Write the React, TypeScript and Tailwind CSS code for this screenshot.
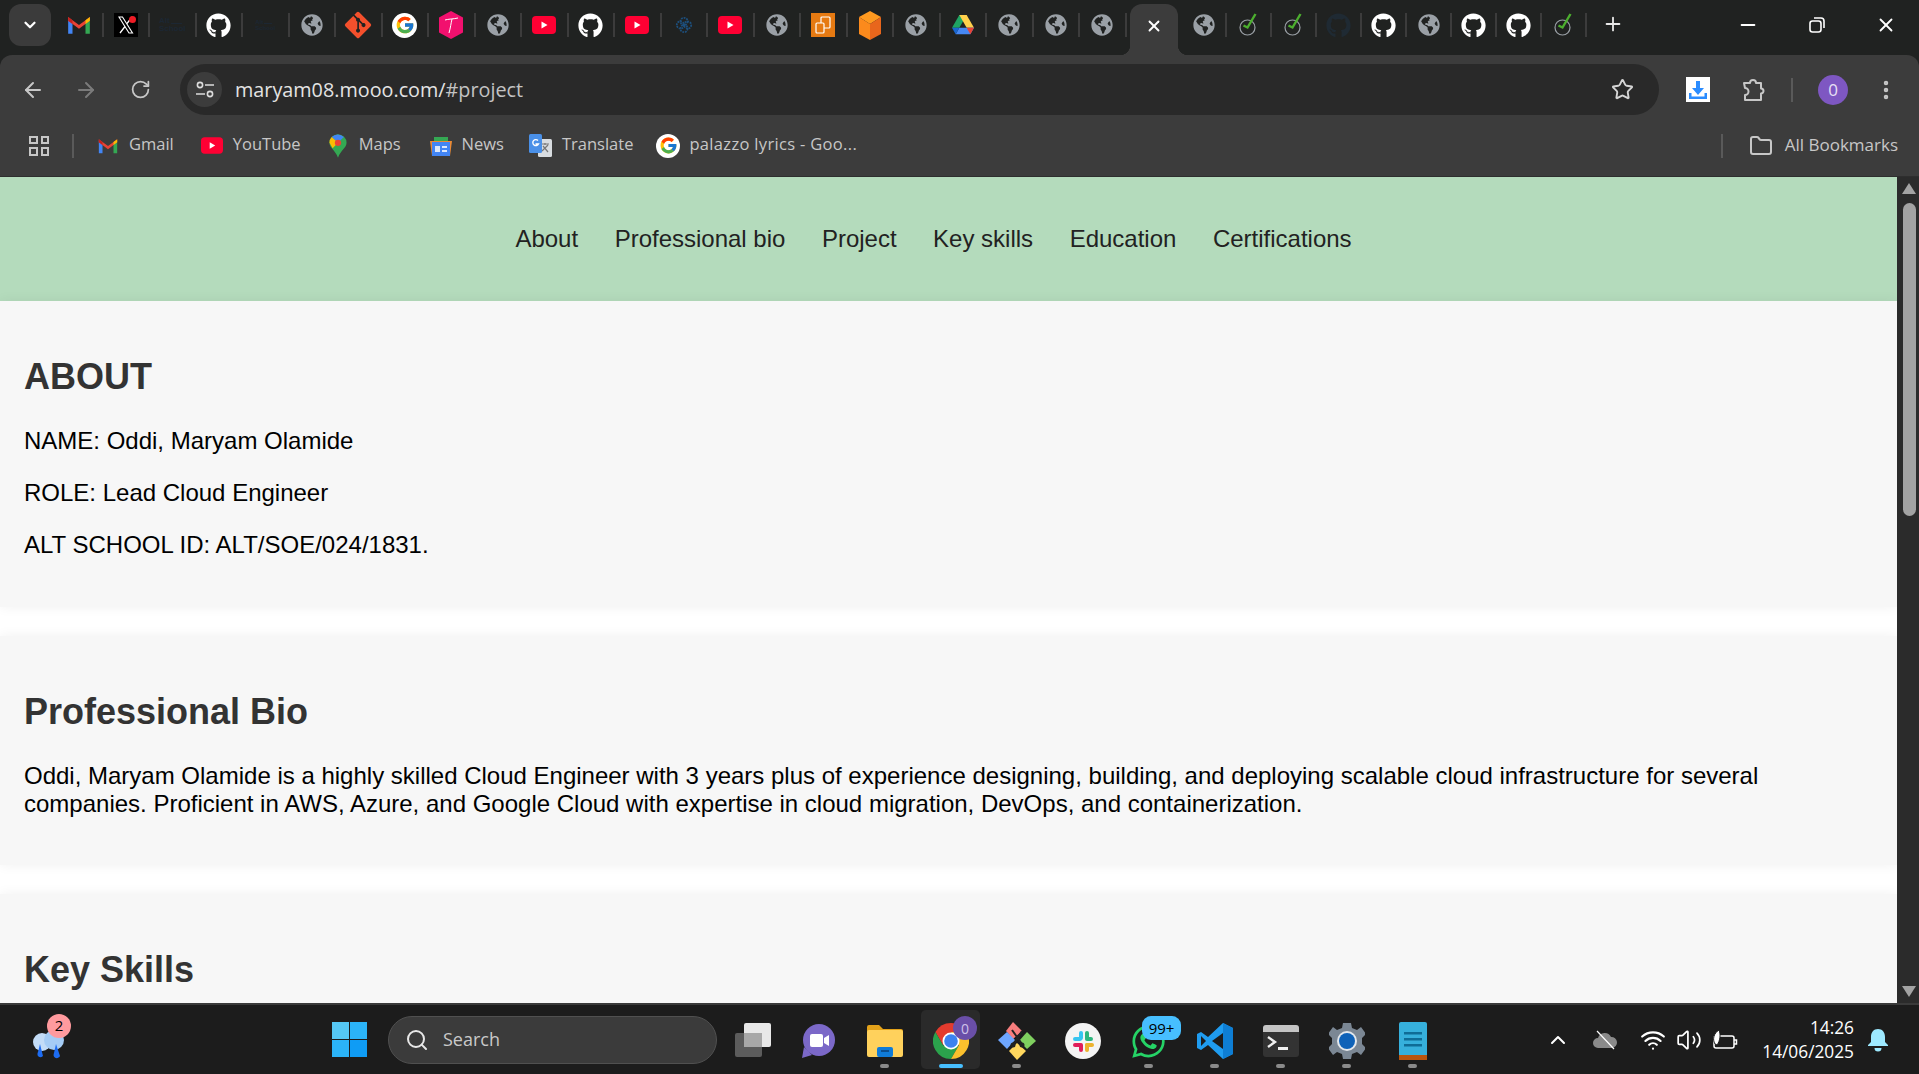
import type { ReactNode } from "react";
import { FaGithub, FaGlobeAmericas, FaGitAlt, FaWhatsapp } from "react-icons/fa";
import { FcGoogle } from "react-icons/fc";
import {
  ArrowLeft,
  ArrowRight,
  ChevronDown,
  ChevronUp,
  Folder,
  Minus,
  MoreVertical,
  Plus,
  RotateCw,
  Search,
  Star,
  Volume2,
  Wifi,
  X,
} from "lucide-react";

const SEGOE = "font-['Open_Sans','Noto_Sans',sans-serif]";

function Globe() {
  return <FaGlobeAmericas className="h-[22px] w-[22px] text-[#9aa0a6]" />;
}

function Gh({ dark }: { dark?: boolean }) {
  return <FaGithub className={dark ? "h-[25px] w-[25px] text-[#1f2a33]" : "h-[25px] w-[25px] text-white"} />;
}

function GmailIcon({ size = 22 }: { size?: number }) {
  return (
    <svg width={size} height={size} viewBox="0 0 24 24" fill="none">
      <path d="M2 6v14h4V10z" fill="#4285f4" />
      <path d="M22 6v14h-4V10z" fill="#34a853" />
      <path d="M2 4.5 6 7.5 12 12 18 7.5 22 4.5V8l-10 7.5L2 8z" fill="#ea4335" />
      <path d="M2 4.5 6 7.5V11L2 8z" fill="#c5221f" />
      <path d="M22 4.5 18 7.5V11l4-3z" fill="#fbbc04" />
    </svg>
  );
}

function YtIcon({ w = 24, h = 18 }: { w?: number; h?: number }) {
  return (
    <svg width={w} height={h} viewBox="0 0 24 18">
      <rect width="24" height="18" rx="4" fill="#ff0033" />
      <path d="M9.5 5.5v7l6-3.5z" fill="#fff" />
    </svg>
  );
}

function XIcon() {
  return (
    <div className="relative flex h-[24px] w-[24px] items-center justify-center bg-black">
      <svg width="18" height="20" viewBox="0 0 18 20" fill="none">
        <path d="M2 2h3.5l10 16h-3.5z" stroke="#fff" strokeWidth="1.1" />
        <path d="M15 2 10 8.500M8 11.500 3 18" stroke="#fff" strokeWidth="1.3" />
      </svg>
      <span className="absolute right-[2px] top-[3px] h-[7px] w-[7px] rounded-full bg-[#ee1c25]" />
    </div>
  );
}

function AltIcon({ big }: { big?: boolean }) {
  return (
    <div
      className={`flex flex-col font-['Liberation_Sans',sans-serif] font-bold text-[#1c2733] ${big ? "text-[8px] leading-[8px]" : "text-[6px] leading-[6px]"}`}
    >
      <span className="flex items-end">
        Alt
        <span className={`mb-[1px] ml-[1px] h-px bg-[#1c2733] ${big ? "w-[11px]" : "w-[8px]"}`} />
      </span>
      <span>School</span>
    </div>
  );
}

function GoogleDisc({ size = 24 }: { size?: number }) {
  return (
    <div className="flex items-center justify-center rounded-full bg-white" style={{ width: size, height: size }}>
      <FcGoogle style={{ width: size - 5, height: size - 5 }} />
    </div>
  );
}

function THex() {
  return (
    <svg width="24" height="28" viewBox="0 0 24 28">
      <path d="M12 0 24 6.500v15L12 28 0 21.500v-15z" fill="#f2106e" />
      <path d="M6 9c3-1 9-1 13-2M13 8c-1 4-1.500 9-3 14" stroke="#fff" strokeWidth="1" fill="none" />
    </svg>
  );
}

function CheckIcon() {
  return (
    <svg width="20" height="26" viewBox="0 0 20 26" fill="none">
      <circle cx="8.500" cy="15.500" r="7.500" stroke="#9aa0a6" strokeWidth="1.2" />
      <path d="M4.500 13.500 8.500 15.500 16.500 2" stroke="#4caf2f" strokeWidth="2.400" />
    </svg>
  );
}

function Aws() {
  return (
    <div className="flex h-[24px] w-[24px] items-center justify-center bg-[#e67a12]">
      <svg width="16" height="18" viewBox="0 0 16 18" fill="none" stroke="#fff" strokeWidth="1.2">
        <rect x="6" y="1" width="9" height="11" rx="1" />
        <rect x="1" y="7" width="8" height="10" rx="1" fill="#e67a12" />
      </svg>
    </div>
  );
}

function Cube() {
  return (
    <svg width="22" height="29" viewBox="0 0 22 29">
      <path d="M11 0 22 6 11 13 0 6z" fill="#ff9a20" />
      <path d="M0 6 11 13v16L0 23z" fill="#fb8a1c" />
      <path d="M22 6 11 13v16l11-6z" fill="#e8661c" />
    </svg>
  );
}

function Drive({ size = 22 }: { size?: number }) {
  return (
    <svg width={size} height={size} viewBox="0 0 24 22">
      <path d="M8 0h8l-8 14H0z" fill="#1fa463" />
      <path d="M16 0l8 14h-8L8 0z" fill="#ffd04b" />
      <path d="M4 21 8 14h16l-4 7z" fill="#4688f4" />
      <path d="M0 14h8l-4 7z" fill="#1967d2" />
      <path d="M24 14h-8l4 7z" fill="#ea4335" />
    </svg>
  );
}

function Blossom() {
  return (
    <svg width="18" height="18" viewBox="0 0 20 20" fill="none" stroke="#1d4f7c" strokeWidth="2" strokeDasharray="2 1">
      <circle cx="10" cy="6" r="4" />
      <circle cx="6" cy="10" r="4" />
      <circle cx="14" cy="10" r="4" />
      <circle cx="10" cy="14" r="4" />
    </svg>
  );
}

function Tab({ children, wide }: { children: ReactNode; wide?: boolean }) {
  return (
    <div className={`flex h-[24px] items-center justify-center border-r-2 border-[#3c3c3c] ${wide ? "w-[46.5px]" : "w-[45px]"}`}>
      {children}
    </div>
  );
}

function TabStrip() {
  const before: ReactNode[] = [
    <GmailIcon size={26} />,
    <XIcon />,
    <AltIcon big />,
    <Gh />,
    <AltIcon />,
    <Globe />,
    <FaGitAlt className="h-[30px] w-[30px] text-[#f4502c]" />,
    <GoogleDisc size={25} />,
    <THex />,
    <Globe />,
    <YtIcon />,
    <Gh />,
    <YtIcon />,
    <Blossom />,
    <YtIcon />,
    <Globe />,
    <Aws />,
    <Cube />,
    <Globe />,
    <Drive />,
    <Globe />,
    <Globe />,
    <Globe />,
  ];
  const after: ReactNode[] = [
    <Globe />,
    <CheckIcon />,
    <CheckIcon />,
    <Gh dark />,
    <Gh />,
    <Globe />,
    <Gh />,
    <Gh />,
    <CheckIcon />,
  ];
  return (
    <div className="flex h-[55px] items-end bg-[#202221]">
      <div className="mb-[9px] ml-[9px] flex h-[42px] w-[42px] items-center justify-center rounded-[12px] bg-[#3b3b3b]">
        <ChevronDown className="h-[18px] w-[18px] text-white" strokeWidth={3} />
      </div>
      <div className="mb-[18px] ml-[6px] flex items-center">
        {before.map((icon, i) => (
          <Tab key={i} wide>
            {icon}
          </Tab>
        ))}
      </div>
      <div className="relative ml-[3.500px] flex h-[51px] w-[48px] items-start justify-center rounded-t-[12px] bg-[#3c3c3c] pt-[13px]">
        <X className="h-[18px] w-[18px] text-white" strokeWidth={2.5} />
        <div className="absolute bottom-0 left-[-10px] h-[10px] w-[10px] bg-[radial-gradient(circle_at_0_0,#202221_10px,#3c3c3c_10.5px)]" />
        <div className="absolute bottom-0 right-[-10px] h-[10px] w-[10px] bg-[radial-gradient(circle_at_100%_0,#202221_10px,#3c3c3c_10.5px)]" />
      </div>
      <div className="mb-[18px] ml-[4px] flex items-center">
        {after.map((icon, i) => (
          <Tab key={i}>{icon}</Tab>
        ))}
      </div>
      <div className="mb-[20px] ml-[15px] flex w-[22px] justify-center">
        <Plus className="h-[22px] w-[22px] text-[#e8e8e8]" strokeWidth={2} />
      </div>
      <div className="flex-1" />
      <div className="mb-[19px] flex items-center pr-[22px] text-white">
        <Minus className="h-[22px] w-[22px]" strokeWidth={2} />
        <div className="ml-[47px] flex h-[22px] w-[22px] items-center justify-center">
          <svg width="18" height="18" viewBox="0 0 18 18" fill="none" stroke="#fff" strokeWidth="1.6">
            <rect x="2" y="5" width="11" height="11" rx="2.500" />
            <path d="M6 2h7a3 3 0 0 1 3 3v7" />
          </svg>
        </div>
        <X className="ml-[47px] h-[22px] w-[22px]" strokeWidth={2} />
      </div>
    </div>
  );
}

function Toolbar() {
  return (
    <div className="flex h-[60px] items-start rounded-t-[12px] bg-[#3c3c3c] pt-[9px]">
      <div className="flex h-[51px] items-center pl-[21px]">
        <ArrowLeft className="h-[24px] w-[24px] text-[#c7c7c7]" strokeWidth={2} />
        <ArrowRight className="ml-[29px] h-[24px] w-[24px] text-[#7b7b7b]" strokeWidth={2} />
        <RotateCw className="ml-[32px] h-[21px] w-[21px] text-[#c7c7c7]" strokeWidth={2} />
      </div>
      <div className="ml-[29px] flex h-[51px] w-[1479px] items-center rounded-full bg-[#292929] pl-[7px] pr-[25px]">
        <div className="flex h-[35px] w-[35px] items-center justify-center rounded-full bg-[#3c3c3c]">
          <svg width="20" height="18" viewBox="0 0 20 18" fill="none" stroke="#dcdcdc" strokeWidth="1.6">
            <circle cx="5" cy="4" r="2.600" />
            <path d="M10 4h9M1 13h9" />
            <circle cx="15" cy="13" r="2.600" />
          </svg>
        </div>
        <span className={`ml-[13px] text-[19.800px] text-[#e3e3e3] ${SEGOE}`}>
          maryam08.mooo.com/<span className="text-[#c3c3c3]">#project</span>
        </span>
        <div className="flex-1" />
        <Star className="h-[23px] w-[23px] text-[#d5d5d5]" strokeWidth={2} />
      </div>
      <div className="flex h-[51px] flex-1 items-center">
        <div className="ml-[27px] flex h-[25px] w-[24px] items-center justify-center bg-white">
          <svg width="20" height="20" viewBox="0 0 20 20" fill="#2b8cff">
            <path d="M8 1h4v7h4l-6 7-6-7h4z" />
            <path d="M1 13h2.500v3.500h13V13H19v6H1z" />
          </svg>
        </div>
        <svg className="ml-[31px]" width="24" height="24" viewBox="0 0 24 24" fill="none" stroke="#c7c7c7" strokeWidth="2" strokeLinejoin="round">
          <path d="M3 5h6a3 3 0 0 1 6 0h5v5.500a2.500 2.500 0 0 1 0 5V22H4v-5a3.500 3.500 0 0 0 0-7z" />
        </svg>
        <div className="ml-[26px] h-[24px] w-[2px] bg-[#5a5a5a]" />
        <div className={`ml-[25px] flex h-[30px] w-[30px] items-center justify-center rounded-full bg-[#7e57c2] text-[17px] text-[#e8e0f5] ${SEGOE}`}>
          0
        </div>
        <MoreVertical className="ml-[26px] h-[24px] w-[24px] text-[#c7c7c7]" strokeWidth={2.5} />
      </div>
    </div>
  );
}

function Bookmark({ icon, label, className, labelClass }: { icon: ReactNode; label: string; className: string; labelClass?: string }) {
  return (
    <div className={`flex items-center ${className}`}>
      <div className="flex w-[26px] justify-center">{icon}</div>
      <span className={`ml-[8px] whitespace-nowrap pb-[2px] text-[16.500px] text-[#c7c7c7] ${SEGOE} ${labelClass ?? ""}`}>{label}</span>
    </div>
  );
}

function MapsPin() {
  return (
    <svg width="18" height="26" viewBox="0 0 20 26">
      <path d="M10 0a9.500 9.500 0 0 1 9.500 9.500C19.500 15 13 18 10 26 7 18 .5 15 .5 9.500A9.500 9.500 0 0 1 10 0z" fill="#34a853" />
      <path d="M3 3a9.500 9.500 0 0 1 13.500 0L10 9.500z" fill="#4285f4" />
      <path d="M.5 9.500A9 9 0 0 1 3 3l7 6.500-6 6z" fill="#fbbc04" />
      <circle cx="10" cy="9.500" r="3.500" fill="#ea4335" />
    </svg>
  );
}

function NewsIcon() {
  return (
    <svg width="22" height="20" viewBox="0 0 22 20">
      <path d="M4 1h14v6H4z" fill="#34a853" />
      <path d="M0 5h22l-2 15H2z" fill="#ea8a35" />
      <rect x="2" y="6" width="18" height="14" fill="#4285f4" />
      <rect x="5" y="10" width="5" height="6" fill="#dce8fb" />
      <rect x="12" y="10" width="5" height="2" fill="#dce8fb" />
      <rect x="12" y="14" width="5" height="2" fill="#dce8fb" />
    </svg>
  );
}

function TranslateIcon() {
  return (
    <svg width="23" height="24" viewBox="0 0 23 24">
      <rect x="9" y="5" width="14" height="18" rx="1.500" fill="#d8dce0" />
      <path d="M12 10h8M16 9v2M13 17l6-6M14 12l5 6" stroke="#777" strokeWidth="1.200" />
      <rect x="0" y="0" width="13" height="19" rx="1.500" fill="#4a90e8" />
      <path d="M9 6.500A3 3 0 1 0 9.500 10H6.500" stroke="#fff" strokeWidth="1.400" fill="none" />
    </svg>
  );
}

function BookmarkBar() {
  return (
    <div className="flex h-[62px] items-center border-b border-[#2e2e2e] bg-[#3c3c3c]">
      <div className="ml-[29px] grid h-[20px] w-[20px] grid-cols-2 gap-[3px]">
        <span className="border-2 border-[#c7c7c7]" />
        <span className="border-2 border-[#c7c7c7]" />
        <span className="border-2 border-[#c7c7c7]" />
        <span className="border-2 border-[#c7c7c7]" />
      </div>
      <div className="ml-[23px] h-[24px] w-[2px] bg-[#5a5a5a]" />
      <Bookmark className="ml-[21px]" icon={<GmailIcon />} label="Gmail" />
      <Bookmark className="ml-[25px]" icon={<YtIcon w={22} h={17} />} label="YouTube" />
      <Bookmark className="ml-[24px]" icon={<MapsPin />} label="Maps" />
      <Bookmark className="ml-[27px]" icon={<NewsIcon />} label="News" />
      <Bookmark className="ml-[24px]" icon={<TranslateIcon />} label="Translate" />
      <Bookmark className="ml-[22px]" icon={<GoogleDisc />} label="palazzo lyrics - Goo..." labelClass="tracking-[0.33px]" />
      <div className="flex-1" />
      <div className="h-[24px] w-[2px] bg-[#5a5a5a]" />
      <Folder className="ml-[26px] h-[24px] w-[24px] text-[#c7c7c7]" strokeWidth={2} />
      <span className={`ml-[12px] mr-[21px] pb-[2px] text-[17px] text-[#c7c7c7] ${SEGOE}`}>All Bookmarks</span>
    </div>
  );
}

function NavBar() {
  const links = ["About", "Professional bio", "Project", "Key skills", "Education", "Certifications"];
  return (
    <nav className="flex h-[124px] shrink-0 items-center justify-center gap-[36.500px] bg-[#b4dbbc] pr-[30px]">
      {links.map((l) => (
        <a key={l} className="text-[24px] text-[#222222]">
          {l}
        </a>
      ))}
    </nav>
  );
}

function Section({ title, children }: { title: string; children?: ReactNode }) {
  return (
    <section className="mb-[29px] bg-[#f7f7f7] px-[24px] pb-[48px] pt-[55px] shadow-[0_0_12px_rgba(0,0,0,0.06)]">
      <h2 className="mb-[30px] text-[36px] font-bold leading-[41px] text-[#333333]">{title}</h2>
      {children}
    </section>
  );
}

function Page() {
  return (
    <div className="flex min-h-0 flex-1">
      <main className="flex-1 overflow-hidden bg-white font-['Liberation_Sans',sans-serif] text-[24px] leading-[28px] text-black">
        <NavBar />
        <Section title="ABOUT">
          <div className="flex flex-col gap-[24px]">
            <p>NAME: Oddi, Maryam Olamide</p>
            <p>ROLE: Lead Cloud Engineer</p>
            <p>ALT SCHOOL ID: ALT/SOE/024/1831.</p>
          </div>
        </Section>
        <Section title="Professional Bio">
          <p className="-mb-px mt-px">
            Oddi, Maryam Olamide is a highly skilled Cloud Engineer with 3 years plus of experience designing, building, and
            deploying scalable cloud infrastructure for several companies. Proficient in AWS, Azure, and Google Cloud with
            expertise in cloud migration, DevOps, and containerization.
          </p>
        </Section>
        <Section title="Key Skills" />
      </main>
      <div className="flex w-[22px] flex-col items-center bg-[#2b2b2b] py-[6px] pl-[2px]">
        <div className="h-0 w-0 border-x-[7px] border-b-[11px] border-x-transparent border-b-[#a3a3a3]" />
        <div className="mt-[9px] h-[313px] w-[13px] rounded-full bg-[#a3a3a3]" />
        <div className="flex-1" />
        <div className="h-0 w-0 border-x-[7px] border-t-[11px] border-x-transparent border-t-[#a3a3a3]" />
      </div>
    </div>
  );
}

function Pip({ active }: { active?: boolean }) {
  return <div className={active ? "h-[4px] w-[24px] rounded-full bg-[#47bfff]" : "h-[4px] w-[9px] rounded-full bg-[#8a8a8a]"} />;
}

function TaskItem({ children, pip, active }: { children: ReactNode; pip?: boolean; active?: boolean }) {
  return (
    <div className={`relative flex h-[59px] w-[59px] flex-col items-center justify-end rounded-[5px] pb-[1px] ${active ? "bg-[#2a2a2a]" : ""}`}>
      <div className="mb-[4px] flex h-[38px] items-center justify-center">{children}</div>
      {pip || active ? <Pip active={active} /> : <div className="h-[4px]" />}
    </div>
  );
}

function Tray() {
  return (
    <div className="flex items-center text-white">
      <ChevronUp className="h-[24px] w-[24px]" strokeWidth={2} />
      <svg className="ml-[22px]" width="26" height="20" viewBox="0 0 26 20">
        <path d="M6 18a5 5 0 0 1 0-10 7 7 0 0 1 13-1 5.500 5.500 0 0 1 1 11z" fill="#8a8a8a" />
        <path d="M5 1l17 18" stroke="#fff" strokeWidth="1.200" />
      </svg>
      <Wifi className="ml-[22px] h-[26px] w-[26px]" strokeWidth={2} />
      <Volume2 className="ml-[10px] h-[26px] w-[26px]" strokeWidth={1.6} />
      <svg className="ml-[10px]" width="26" height="22" viewBox="0 0 26 22" fill="none" stroke="#fff" strokeWidth="1.500">
        <rect x="2" y="7" width="20" height="12" rx="2" />
        <path d="M22 11h2.500v4H22" />
        <path d="M7 1C2 4 0 10 3 15l2 1c3-4 4-10 2-15z" fill="#fff" stroke="#1c1c1c" strokeWidth="1" />
      </svg>
      <div className={`ml-[12px] flex w-[104px] flex-col items-end text-[17.300px] leading-[24px] ${SEGOE}`}>
        <span>14:26</span>
        <span>14/06/2025</span>
      </div>
      <svg className="ml-[13px]" width="22" height="24" viewBox="0 0 22 24" fill="#9de9ff">
        <path d="M11 1c4.500 0 7 3.500 7 8v5l3 3v1H1v-1l3-3V9c0-4.500 2.500-8 7-8z" />
        <path d="M7.500 20h7a3.500 3.500 0 0 1-7 0z" />
      </svg>
    </div>
  );
}

function ChromeIcon() {
  return (
    <svg width="36" height="36" viewBox="-18 -18 36 36">
      <path d="M0-18A18 18 0 0 1 15.600-9H0z" fill="#e33b2e" />
      <path d="M0-18A18 18 0 0 0-15.600-9L-7.800 4.500 0-9z" fill="#e33b2e" />
      <path d="M-15.600-9A18 18 0 0 0 0 18L7.800 4.500-7.800 4.500z" fill="#2ba24c" />
      <path d="M15.600-9A18 18 0 0 1 0 18L7.800 4.500 0-9z" fill="#fbc02d" />
      <circle r="8.500" fill="#fff" />
      <circle r="6.800" fill="#3b82f0" />
    </svg>
  );
}

function Taskbar() {
  return (
    <div className="flex h-[71px] shrink-0 items-center border-t-2 border-[#3a3a3a] bg-[#1c1c1c] pl-[30px]">
      <div className="relative h-[36px] w-[40px]">
        <svg className="mt-[6px]" width="38" height="32" viewBox="0 0 38 32">
          <circle cx="12" cy="14" r="9" fill="#c3dcf7" />
          <circle cx="24" cy="12" r="10" fill="#a5ccf5" />
          <path d="M10 16l3 12c-3 3-7 0-5-4zM26 16l4 12c-2 4-8 2-6-3z" fill="#1d6cf2" />
        </svg>
        <span className={`absolute -top-[8px] left-[17px] flex h-[24px] w-[24px] items-center justify-center rounded-full bg-[#ff9a9e] text-[15px] text-black ${SEGOE}`}>
          2
        </span>
      </div>
      <svg className="ml-[262px]" width="35" height="35" viewBox="0 0 35 35">
        <rect width="17" height="17" fill="#55c8f5" />
        <rect x="18" width="17" height="17" fill="#2bb4f8" />
        <rect y="18" width="17" height="17" fill="#2bb4f8" />
        <rect x="18" y="18" width="17" height="17" fill="#0f9cf5" />
      </svg>
      <div className="ml-[21px] flex h-[48px] w-[329px] items-center rounded-full border border-[#505050] bg-[#3b3b3b] pl-[16px]">
        <Search className="h-[24px] w-[24px] text-[#e8e8e8]" strokeWidth={2} />
        <span className={`ml-[14px] text-[18px] text-[#c9c9c9] ${SEGOE}`}>Search</span>
      </div>
      <div className="ml-[18px] flex w-[36px] justify-end">
        <svg width="36" height="34" viewBox="0 0 36 34">
          <rect y="10" width="27" height="24" rx="2" fill="#5c5c5c" />
          <rect x="9" width="27" height="24" rx="2" fill="#e8e8e8" />
          <rect x="9" y="10" width="18" height="14" fill="#a8a8a8" />
        </svg>
      </div>
      <div className="ml-[18px] flex items-center gap-[7px]">
        <TaskItem>
          <svg width="36" height="36" viewBox="0 0 36 36">
            <circle cx="18" cy="17" r="16" fill="#7b68c8" />
            <path d="M3 24 1 35l10-3z" fill="#7b68c8" />
            <rect x="9" y="11" width="13" height="13" rx="2" fill="#fff" />
            <path d="M23 15l5-3v11l-5-3z" fill="#fff" />
          </svg>
        </TaskItem>
        <TaskItem pip>
          <svg width="36" height="32" viewBox="0 0 36 32">
            <path d="M0 2a2 2 0 0 1 2-2h10l4 4h18a2 2 0 0 1 2 2v6H0z" fill="#e3a21a" />
            <rect y="5" width="36" height="27" rx="2" fill="#ffd15c" />
            <rect x="10" y="22" width="16" height="10" rx="2" fill="#0f7bd8" />
            <rect x="14" y="25" width="8" height="2" fill="#0a4e8f" />
          </svg>
        </TaskItem>
        <TaskItem active>
          <ChromeIcon />
          <span className={`absolute right-[3px] top-[6px] flex h-[24px] w-[24px] items-center justify-center rounded-full bg-[#6a4fa8] text-[14px] text-[#cfc3ea] ${SEGOE}`}>
            0
          </span>
        </TaskItem>
        <TaskItem pip>
          <svg width="38" height="38" viewBox="0 0 38 38">
            <path d="M15 0l9 9-9 8-7-8z" fill="#f77d7d" />
            <path d="M9 10l8 8-8 9-9-9z" fill="#6ea6ff" />
            <path d="M29 10l9 9-9 8-8-8z" fill="#7fcf5f" />
            <path d="M19 21l9 8-9 9-8-9z" fill="#ffd75e" />
            <path d="M14 8l10 14M24 9 16 22" stroke="#222" strokeWidth="2" />
            <circle cx="15" cy="23" r="2.500" fill="#222" />
            <circle cx="24" cy="23" r="2.500" fill="#222" />
          </svg>
        </TaskItem>
        <TaskItem>
          <svg width="36" height="36" viewBox="0 0 36 36">
            <circle cx="18" cy="18" r="18" fill="#f4f4f4" />
            <rect x="14" y="8" width="4" height="9" rx="2" fill="#36c5f0" />
            <rect x="8" y="14" width="9" height="4" rx="2" fill="#36c5f0" />
            <rect x="20" y="8" width="4" height="9" rx="2" fill="#2eb67d" />
            <rect x="20" y="14" width="8" height="4" rx="2" fill="#2eb67d" />
            <rect x="14" y="20" width="4" height="9" rx="2" fill="#e01e5a" />
            <rect x="8" y="20" width="9" height="4" rx="2" fill="#e01e5a" />
            <rect x="20" y="20" width="9" height="4" rx="2" fill="#ecb22e" />
            <rect x="20" y="20" width="4" height="9" rx="2" fill="#ecb22e" />
          </svg>
        </TaskItem>
        <TaskItem pip>
          <FaWhatsapp className="h-[37px] w-[37px] text-[#25d366]" />
          <span className={`absolute left-[23px] top-[6px] flex h-[24px] w-[39px] items-center justify-center rounded-[9px] bg-[#47bfff] text-[15px] text-black ${SEGOE}`}>
            99+
          </span>
        </TaskItem>
        <TaskItem pip>
          <svg width="36" height="36" viewBox="0 0 36 36">
            <path d="M26 0 36 5v26l-10 5-15-14-7 5-4-2V11l4-2 7 5z" fill="#1f9cf0" />
            <path d="M26 0v36l10-5V5z" fill="#0e7ed4" />
            <path d="M26 10 15 18l11 8z" fill="#1c1c1c" />
            <path d="M4 13l5 5-5 5z" fill="#1c1c1c" />
          </svg>
        </TaskItem>
        <TaskItem pip>
          <svg width="36" height="32" viewBox="0 0 36 32">
            <rect width="36" height="32" rx="3" fill="#333" />
            <path d="M0 3a3 3 0 0 1 3-3h30a3 3 0 0 1 3 3v4H0z" fill="#c4c4c4" />
            <path d="M5 12l7 5-7 5" stroke="#f0f0f0" strokeWidth="2.400" fill="none" />
            <rect x="15" y="22" width="10" height="3" fill="#f0f0f0" />
          </svg>
        </TaskItem>
        <TaskItem pip>
          <svg width="36" height="36" viewBox="0 0 36 36">
            <path d="M14 0h8l1 5 5 2 4-3 5 7-4 4v6l4 4-5 7-4-3-5 2-1 5h-8l-1-5-5-2-4 3-5-7 4-4v-6l-4-4 5-7 4 3 5-2z" fill="#7b8794" />
            <circle cx="18" cy="18" r="10" fill="#e4e8ec" />
            <circle cx="18" cy="18" r="8" fill="#0f62b8" />
          </svg>
        </TaskItem>
        <TaskItem pip>
          <svg width="28" height="38" viewBox="0 0 28 38">
            <rect width="28" height="36" rx="2" fill="#36b0dc" />
            <rect y="33" width="28" height="5" fill="#b9560f" />
            <rect x="5" y="10" width="18" height="2.500" fill="#0f6c96" />
            <rect x="5" y="16" width="18" height="2.500" fill="#0f6c96" />
            <rect x="5" y="22" width="18" height="2.500" fill="#0f6c96" />
          </svg>
        </TaskItem>
      </div>
      <div className="flex-1" />
      <div className="pr-[30px]">
        <Tray />
      </div>
    </div>
  );
}

export default function App() {
  return (
    <div className="flex h-[1074px] w-full flex-col overflow-hidden bg-[#202221]">
      <TabStrip />
      <Toolbar />
      <BookmarkBar />
      <Page />
      <Taskbar />
    </div>
  );
}
